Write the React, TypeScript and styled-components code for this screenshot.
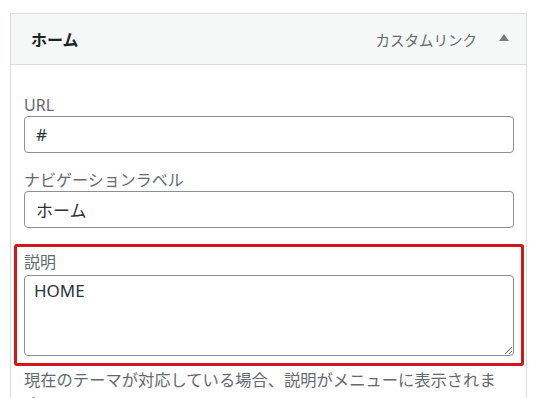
import { createGlobalStyle, styled } from 'styled-components'

const GlobalStyle = createGlobalStyle`
    html, body {
        margin: 0;
        padding: 0;
        background: #ffffff;
        font-family: "Noto Sans", "Noto Sans CJK JP", sans-serif;
        color: #3c434a;
        overflow: hidden;
    }
`

const Page = styled.div`
    padding: 13px 11px 0 10px;
`

const Panel = styled.div`
    border: 1px solid #dcdcde;
    border-bottom: none;
    background: #fff;
`

const Header = styled.div`
    height: 51px;
    box-sizing: border-box;
    background: #f6f7f7;
    border-bottom: 1px solid #dcdcde;
    display: flex;
    align-items: center;
    justify-content: space-between;
    padding: 0 15px 0 20px;
`

const Title = styled.span`
    font-family: "Noto Sans CJK JP", sans-serif;
    font-weight: 700;
    font-size: 16px;
    color: #1d2327;
`

const Meta = styled.div`
    display: flex;
    align-items: center;
    gap: 22px;
`

const Type = styled.span`
    font-family: "Noto Sans CJK JP", sans-serif;
    font-size: 14.5px;
    color: #646970;
`

const Arrow = styled.span`
    width: 0;
    height: 0;
    border-left: 5px solid transparent;
    border-right: 5px solid transparent;
    border-bottom: 7px solid #787c82;
    margin-top: -3px;
    margin-right: 2px;
`

const Body = styled.div`
    padding: 29px 12px 0 13px;
`

const Field = styled.div<{ $highlight?: boolean }>`
    margin-bottom: ${p => (p.$highlight ? '0' : '16px')};
    ${p =>
        p.$highlight &&
        `
        margin-left: -10px;
        margin-right: -10px;
        padding: 4px 7px 7px;
        border: 3px solid #d0171b;
        border-radius: 3px;
    `}
`

const Label = styled.label`
    display: block;
    font-family: "Noto Sans", "Noto Sans CJK JP", sans-serif;
    font-size: 16px;
    line-height: 22px;
    color: #646970;
`

const Input = styled.input`
    display: block;
    width: 100%;
    box-sizing: border-box;
    height: 37px;
    margin: 0;
    padding: 0 11px;
    border: 1px solid #8c8f94;
    border-radius: 4px;
    font-family: "Noto Sans", "Noto Sans CJK JP", sans-serif;
    font-size: 17px;
    color: #2c3338;
    background: #fff;
    outline: none;
`

const TextArea = styled.textarea`
    display: block;
    width: 100%;
    box-sizing: border-box;
    height: 81px;
    margin: 2px 0 0;
    padding: 3px 9px;
    border: 1px solid #8c8f94;
    border-radius: 4px;
    font-family: "Noto Sans", "Noto Sans CJK JP", sans-serif;
    font-size: 17px;
    line-height: 1.4;
    color: #2c3338;
    background: #fff;
    resize: vertical;
    outline: none;
`

const Hint = styled.p`
    margin: 1px 0 0;
    font-family: "Noto Sans CJK JP", sans-serif;
    font-size: 16.3px;
    line-height: 24px;
    color: #646970;
`

export default function App() {
    return (
        <Page>
            <GlobalStyle />
            <Panel>
                <Header>
                    <Title>ホーム</Title>
                    <Meta>
                        <Type>カスタムリンク</Type>
                        <Arrow />
                    </Meta>
                </Header>
                <Body>
                    <Field>
                        <Label>URL</Label>
                        <Input defaultValue="#" />
                    </Field>
                    <Field>
                        <Label>ナビゲーションラベル</Label>
                        <Input defaultValue="ホーム" />
                    </Field>
                    <Field $highlight>
                        <Label>説明</Label>
                        <TextArea defaultValue="HOME" />
                    </Field>
                    <Hint>現在のテーマが対応している場合、説明がメニューに表示されます。</Hint>
                </Body>
            </Panel>
        </Page>
    )
}
